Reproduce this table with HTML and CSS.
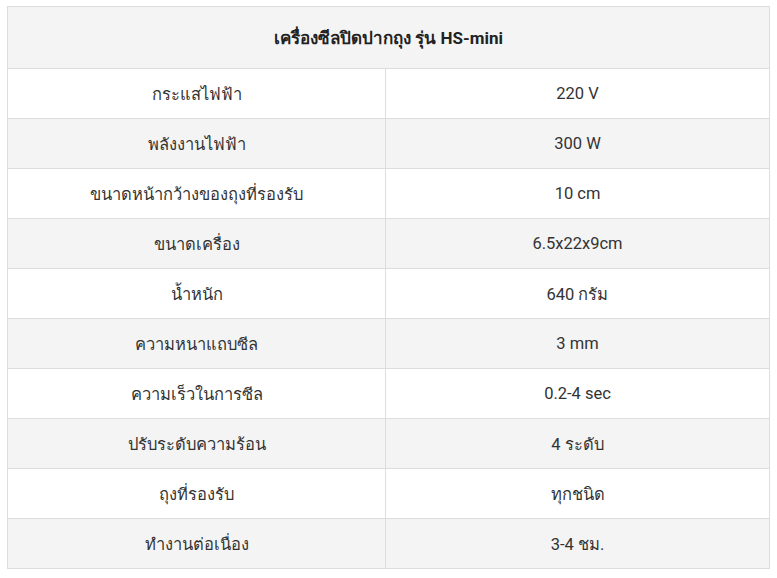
FILE: index.html
```html
<!DOCTYPE html>
<html lang="th">
<head>
<meta charset="utf-8">
<link rel="stylesheet" href="styles.css">
</head>
<body>
<div class="wrap">
<table class="spec">
  <colgroup>
    <col class="col-label">
    <col class="col-value">
  </colgroup>
  <thead>
    <tr><th colspan="2">เครื่องซีลปิดปากถุง รุ่น HS-mini</th></tr>
  </thead>
  <tbody>
    <tr><td>กระแสไฟฟ้า</td><td>220 V</td></tr>
    <tr><td>พลังงานไฟฟ้า</td><td>300 W</td></tr>
    <tr><td>ขนาดหน้ากว้างของถุงที่รองรับ</td><td>10 cm</td></tr>
    <tr><td>ขนาดเครื่อง</td><td>6.5x22x9cm</td></tr>
    <tr><td>น้ำหนัก</td><td>640 กรัม</td></tr>
    <tr><td>ความหนาแถบซีล</td><td>3 mm</td></tr>
    <tr><td>ความเร็วในการซีล</td><td>0.2-4 sec</td></tr>
    <tr><td>ปรับระดับความร้อน</td><td>4 ระดับ</td></tr>
    <tr><td>ถุงที่รองรับ</td><td>ทุกชนิด</td></tr>
    <tr><td>ทำงานต่อเนื่อง</td><td>3-4 ชม.</td></tr>
  </tbody>
</table>
</div>
</body>
</html>
```

FILE: styles.css
```css
html, body {
  margin: 0;
  padding: 0;
  background: #ffffff;
}
.wrap {
  padding: 6px 0 0 7px;
}
.spec {
  border-collapse: collapse;
  width: 762px;
  table-layout: fixed;
  font-family: Roboto, "Noto Sans", sans-serif;
  font-size: 16.5px;
  color: #333333;
}
.col-label {
  width: 378px;
}
.col-value {
  width: 384px;
}
.spec th,
.spec td {
  border: 1px solid #dddddd;
  text-align: center;
  vertical-align: middle;
  padding: 0 8px;
}
.spec th {
  height: 61px;
  background: #f4f4f4;
  font-weight: bold;
  font-size: 17px;
  color: #222222;
}
.spec td {
  height: 49px;
}
.spec tbody tr:nth-child(even) td {
  background: #f4f4f4;
}
```
